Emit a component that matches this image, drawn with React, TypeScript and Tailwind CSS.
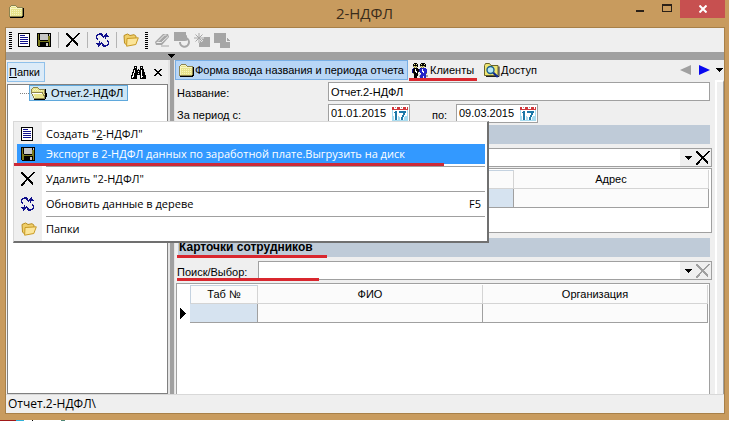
import { useState } from 'react'
import type { ReactNode } from 'react'

const COLORS: Record<string, string> = {
  k: '#000000',
  w: '#ffffff',
  g: '#a0a0a0',
  s: '#c6c6c6',
  n: '#10108c',
  b: '#2424c8',
  o: '#7a7a1e',
  y: '#e8e48c',
  l: '#f8f4c0',
  d: '#8c8450',
  r: '#d0383c',
  c: '#a8dcf0',
  a: '#1c78a8',
}

interface PixelsProps {
  rows: string[]
  className?: string
}

// one character = one pixel, a dot is transparent
function Pixels({ rows, className = '' }: PixelsProps) {
  return (
    <svg
      width={rows[0].length}
      height={rows.length}
      shapeRendering="crispEdges"
      aria-hidden="true"
      className={`shrink-0 ${className}`}
    >
      {rows.map((row, y) =>
        row.split('').map((c, x) =>
          COLORS[c] ? <rect key={`${x}-${y}`} x={x} y={y} width={1} height={1} fill={COLORS[c]} /> : null
        )
      )}
    </svg>
  )
}

const DOC = [
  'kkkkkkkkkkkk',
  'kwwwwwwwwwwk',
  'kwnnnnnwwwwk',
  'kwwwwwwwwwwk',
  'kwnnnnnnnnwk',
  'kwwwwwwwwwwk',
  'kwnnnnnnnnwk',
  'kwwwwwwwwwwk',
  'kwnnnnnnnnwk',
  'kwwwwwwwwwwk',
  'kwnnnnnnnnwk',
  'kwwwwwwwwwwk',
  'kwwwwwwwwwwk',
  'kkkkkkkkkkkk',
]

const DISK = [
  'kkkkkkkkkkkkkk',
  'kokssssssssksk',
  'kokssssssssksk',
  'kokssssssssook',
  'kokssssssssook',
  'kokssssssssook',
  'kokssssssssook',
  'kookkkkkkkkook',
  'kooooooooooook',
  'kookkkkkkkkkok',
  'kookkkkkksskok',
  'kookkkkkksskok',
  'kookkkkkksskok',
  '.kkkkkkkkkkkkk',
]

const CROSS = [
  'kk..........kk',
  'kkk........kk.',
  '.kkk......kk..',
  '..kkk....kk...',
  '...kkk..kk....',
  '....kkkkk.....',
  '.....kkk......',
  '.....kkkk.....',
  '....kk.kkk....',
  '...kk...kkk...',
  '..kk.....kkk..',
  '.kkk......kk..',
  'kkk........k..',
  'kk............',
]

const CROSS_OFF = CROSS.map(row => row.replace(/k/g, 'g'))

const REFRESH = [
  '...nnn....n..',
  '.nnnnnn..nn..',
  'nn...nn.nnnn.',
  'n.....nnnnnnn',
  'n......n.n...',
  'nn.......n...',
  '.n...........',
  '...........n.',
  '...n.......nn',
  '...n.n......n',
  'nnnnnnn.....n',
  '.nnnn.nn...nn',
  '..nn..nnnnnn.',
  '..n....nnn...',
]

const FOLDER = [
  '..ddddd........',
  '.dllllld.......',
  'dlyyyyyldddddd.',
  'dlllllllllllldk',
  'dlyyyyyyyyyyydk',
  'dlylylylylylydk',
  'dlyyyyyyyyyyydk',
  'dlylylylylylydk',
  'dlyyyyyyyyyyydk',
  'dlylylylylylydk',
  'dlyyyyyyyyyyydk',
  'dddddddddddddkk',
  '.kkkkkkkkkkkkk.',
]

const FOLDER_OPEN = [
  '..ddddd.........',
  '.dyyyyyd........',
  'dyylylyyddddddk.',
  'dylylylylylyydk.',
  'dyyyyyyyyyyyydk.',
  'ddddddddddddydk.',
  'dwwwwwwwwwwdydkk',
  '.dlyyyyyyyyydykk',
  '.dlyyyyyyyyyddkk',
  '..dlyyyyyyyyydkk',
  '..dlyyyyyyyyydk.',
  '...dddddddddddk.',
  '...kkkkkkkkkkk..',
]

const BINOCULARS = [
  '...kkk...kkk...',
  '...kwk...kwk...',
  '...kkk...kkk...',
  '..kkkk.k.kkkk..',
  '..kwkkkkkkwkk..',
  '..kwkkkwkkwkk..',
  '.kkwkkkkkkwkkk.',
  '.kwkkkkwkkwkkk.',
  '.kwkkkkkkkwkkk.',
  'kkwkkk...kwkkkk',
  'kwwkkk...kwwkkk',
  'kwkkkk...kwkkkk',
  'kkkkkk...kkkkkk',
]

const SMALL_CROSS = ['kk....kk', '.kk..kk.', '..kkkk..', '...kk...', '..kkkk..', '.kk..kk.', 'kk....kk']

const CARET = ['kkkkkkk', '.kkkkk.', '..kkk..', '...k...']

const MARKER = ['k.....', 'kk....', 'kkk...', 'kkkk..', 'kkkkk.', 'kkkkkk', 'kkkkk.', 'kkkk..', 'kkk...', 'kk....', 'k.....']

const CALENDAR = [
  '..www...www...w.',
  'rrwgwrrrwgwrrrwr',
  'rrwwwrrrwwwrrrwr',
  'rrrrrrrrrrrrrrrr',
  'cwwwwwwwwwwwwwwc',
  'cwwaawwaaaaaaawc',
  'cwaaawwaaaaaaawc',
  'cwwaawwwwwwaawwc',
  'cwwaawwwwwwaawwc',
  'cwwaawwwwwaawwwc',
  'ccwaawcwwwaawccc',
  'ccwaawccwaawcccc',
  'ccwaawccwaawcccc',
  'ccwaawccwaawcccc',
  'cccccccccccccccc',
]

const CLIENTS = [
  '..kkk....kkkk...',
  '.kykyk..kykkyk..',
  '.kkkkk..kkkkkk..',
  '.dydyk..dydydk..',
  '..dyd....dyd....',
  '.nkkkk..nbbbbb..',
  'nkkwkkknbbwbbbb.',
  'nkkwkkknbbwbbbb.',
  'nkkwwkkbbbwwbbb.',
  'nkkkwkswbbbwbbb.',
  '.dkkkkwswbbbbbd.',
  '..kkkkswsbbbbb..',
  '..kkkk.sbbbbbbgg',
  '..kkk..gbbb.bbgg',
  '..kkk...bbb.bb..',
]

function YellowFolder({ className = '' }: { className?: string }) {
  return (
    <svg width="16" height="14" viewBox="0 0 16 14" className={`shrink-0 ${className}`} aria-hidden="true">
      <path d="M1 2.5 4.5 1 7 2.5l4-.8 2 1.5v3L4 12.5 1.5 10z" fill="#f0cf6a" stroke="#b98d20" />
      <path d="M4 5.5 15.3 4.8 12.8 11.5 3.6 13.2z" fill="#fbe59a" stroke="#c99a24" />
    </svg>
  )
}

function AccessIcon() {
  return (
    <svg width="16" height="15" viewBox="0 0 16 15" aria-hidden="true" className="shrink-0">
      <path d="M.5 12.5v-10l1-2h4l1.5 2h7v10z" fill="#efe672" stroke="#6c6628" />
      <path d="M2 13.5h13v-10" fill="none" stroke="#222" />
      <circle cx="6.5" cy="7" r="3.5" fill="#b8e8f4" stroke="#1b5f8c" strokeWidth="1.4" />
      <path d="m9.3 9.7 4.5 4.3" stroke="#102c90" strokeWidth="2.2" />
    </svg>
  )
}

function EraserIcon() {
  return (
    <svg width="15" height="14" viewBox="0 0 15 14" aria-hidden="true">
      <path d="M0 9 8 1h5l1 3-7 8H1z" fill="#a6a6a6" />
      <path d="M3 8.5 9.500 2h2M1.500 9.500h5L13 3.500" stroke="#efefef" fill="none" />
      <path d="M6 13h8" stroke="#a6a6a6" />
    </svg>
  )
}

function RotateIcon() {
  return (
    <svg width="17" height="16" viewBox="0 0 17 16" aria-hidden="true">
      <path d="M0 0h12v9H0z" fill="#a6a6a6" />
      <path d="M6 10a4.500 4.500 0 1 0 6-4" fill="none" stroke="#efefef" strokeWidth="4" />
      <path d="M6 10a4.500 4.500 0 1 0 6-4" fill="none" stroke="#a6a6a6" strokeWidth="2" />
      <path d="m8 6 5-3v6z" fill="#a6a6a6" />
    </svg>
  )
}

function NewShapeIcon() {
  return (
    <svg width="16" height="14" viewBox="0 0 16 14" aria-hidden="true">
      <path d="M5 4h11v10H5z" fill="#a6a6a6" />
      <path d="M5 0v10M0 5h10M1.500 1.500l7 7M8.500 1.500l-7 7" stroke="#efefef" strokeWidth="2" />
      <path d="M5 0v10M0 5h10M1.500 1.500l7 7M8.500 1.500l-7 7" stroke="#a6a6a6" />
    </svg>
  )
}

function CopyShapeIcon() {
  return (
    <svg width="17" height="15" viewBox="0 0 17 15" aria-hidden="true" shapeRendering="crispEdges">
      <path d="M0 0h12v10H0z" fill="#a6a6a6" />
      <path d="M5 11h3M13 3v2" stroke="#efefef" />
      <path d="M6 5h7l3 3v7H6z" fill="#a6a6a6" />
      <path d="M12.500 5v3.500H16" stroke="#efefef" fill="none" />
    </svg>
  )
}

function ToolButton({ label, disabled, children }: { label: string; disabled?: boolean; children: ReactNode }) {
  return (
    <button type="button" aria-label={label} disabled={disabled} className="flex h-5 w-5 items-center justify-center">
      {children}
    </button>
  )
}

function Grip() {
  return (
    <div className="flex w-[3px] flex-col gap-px">
      {Array.from({ length: 9 }, (_, i) => (
        <span key={i} className="h-px bg-black" />
      ))}
    </div>
  )
}

function ToolSeparator() {
  return <div className="mx-1 h-4 w-px bg-[#b4b4b4]" />
}

function Toolbar() {
  return (
    <div className="flex h-6 shrink-0 items-center bg-[#efefef] pl-[3px]">
      <Grip />
      <div className="ml-[2px] flex items-center">
        <ToolButton label="Создать"><Pixels rows={DOC} /></ToolButton>
        <ToolButton label="Экспорт"><Pixels rows={DISK} /></ToolButton>
        <ToolSeparator />
        <ToolButton label="Удалить"><Pixels rows={CROSS} /></ToolButton>
        <ToolSeparator />
        <ToolButton label="Обновить"><Pixels rows={REFRESH} /></ToolButton>
        <ToolSeparator />
        <ToolButton label="Папки"><YellowFolder /></ToolButton>
      </div>
      <div className="ml-1 flex items-center">
        <Grip />
        <div className="ml-1 flex items-center">
          <ToolButton label="Очистить" disabled><EraserIcon /></ToolButton>
          <ToolButton label="Заменить" disabled><RotateIcon /></ToolButton>
          <ToolButton label="Добавить" disabled><NewShapeIcon /></ToolButton>
          <ToolButton label="Копировать" disabled><CopyShapeIcon /></ToolButton>
        </div>
      </div>
    </div>
  )
}

function TitleBar() {
  return (
    <header className="relative flex h-[27px] shrink-0 items-start justify-center">
      <Pixels rows={FOLDER} className="absolute left-[9px] top-[5px]" />
      <h1 className="font-['Open_Sans',sans-serif] text-[15px] leading-[26px] text-[#3a2c1a]">2-НДФЛ</h1>
      <div className="absolute right-1 top-0 flex h-[18px]">
        <button type="button" aria-label="Свернуть" className="flex w-[27px] justify-center pt-[10px]">
          <span className="h-[2px] w-2 bg-[#2b2118]" />
        </button>
        <button type="button" aria-label="Развернуть" className="flex w-[27px] justify-center pt-1">
          <span className="h-2 w-[10px] border border-t-2 border-[#2b2118]" />
        </button>
        <button type="button" aria-label="Закрыть" className="flex w-[45px] items-center justify-center bg-[#c75050]">
          <svg width="8" height="8" viewBox="0 0 8 8" aria-hidden="true">
            <path d="m.5.5 7 7m0-7-7 7" stroke="#fff" strokeWidth="2" />
          </svg>
        </button>
      </div>
    </header>
  )
}

function TreePanel() {
  return (
    <aside className="flex w-[162px] shrink-0 flex-col pl-px">
      <div className="flex h-6 items-center">
        <button type="button" className="h-5 w-[38px] border border-[#8fc0ea] bg-[#dcebf8] pl-px text-left text-[11px]">
          <span className="underline">П</span>апки
        </button>
        <button type="button" aria-label="Найти" className="ml-auto"><Pixels rows={BINOCULARS} /></button>
        <button type="button" aria-label="Закрыть панель" className="mr-[6px] ml-2"><Pixels rows={SMALL_CROSS} /></button>
      </div>
      <ul className="flex-1 border border-[#808080] bg-white">
        <li className="flex items-center pl-3">
          <span className="w-[9px] border-t border-dotted border-[#808080]" />
          <button type="button" className="flex h-4 items-center gap-1 border border-[#5fa8dc] bg-[#cde6f5] pr-1 pl-px text-[11px]">
            <Pixels rows={FOLDER_OPEN} />
            Отчет.2-НДФЛ
          </button>
        </li>
      </ul>
    </aside>
  )
}

function Tabs() {
  return (
    <div role="tablist" className="flex h-5 shrink-0 items-center text-[11px]">
      <button type="button" role="tab" aria-selected="true" className="flex h-5 items-center gap-px border border-[#78aee4] bg-[#b8d6f6] px-[3px]">
        <Pixels rows={FOLDER} />
        Форма ввода названия и периода отчета
      </button>
      <button type="button" role="tab" aria-selected="false" className="relative ml-px flex h-5 items-center gap-[2px] px-[3px]">
        <Pixels rows={CLIENTS} />
        Клиенты
        <span className="absolute inset-x-0 -bottom-px h-[3px] bg-[#d9272e]" />
      </button>
      <button type="button" role="tab" aria-selected="false" className="ml-1 flex h-5 items-center gap-px px-[3px]">
        <AccessIcon />
        Доступ
      </button>
      <div className="ml-auto flex items-center gap-[6px] pr-px">
        <button type="button" aria-label="Назад">
          <svg width="12" height="12" aria-hidden="true"><path d="M0 6 11 1v10z" fill="#a0a0a0" /></svg>
        </button>
        <button type="button" aria-label="Вперед">
          <svg width="12" height="12" aria-hidden="true"><path d="M12 6 1 1v10z" fill="#0808f0" /></svg>
        </button>
        <button type="button" aria-label="Список вкладок"><Pixels rows={CARET} /></button>
      </div>
    </div>
  )
}

function DateField({ id, value, onChange }: { id: string; value: string; onChange: (v: string) => void }) {
  return (
    <div className="flex h-[19px] w-[82px] border border-[#a0a0a0] bg-white pr-px">
      <input
        id={id}
        value={value}
        onChange={e => onChange(e.target.value)}
        className="w-0 min-w-0 flex-1 pl-[2px] text-[11px] outline-none"
      />
      <button type="button" aria-label="Выбрать дату" className="flex items-center"><Pixels rows={CALENDAR} /></button>
    </div>
  )
}

function Combo({ id, label, disabled }: { id: string; label?: string; disabled?: boolean }) {
  return (
    <div className="flex h-[19px] flex-1 border border-[#a0a0a0] bg-white">
      <div className="relative flex-1">
        <select id={id} aria-label={label} className="h-full w-full appearance-none pr-4 pl-1 text-[11px] outline-none">
          <option></option>
        </select>
        <span className="pointer-events-none absolute inset-y-0 right-0 flex w-4 items-center justify-center bg-[#efefef]">
          <Pixels rows={CARET} />
        </span>
      </div>
      <button type="button" aria-label="Очистить" disabled={disabled} className="flex w-[15px] items-center bg-[#efefef]">
        <Pixels rows={disabled ? CROSS_OFF : CROSS} />
      </button>
    </div>
  )
}

interface GridProps {
  label: string
  columns: { title: string; width: string }[]
  selected: number
}

function Grid({ label, columns, selected }: GridProps) {
  return (
    <table aria-label={label} className="w-full table-fixed border-separate border-spacing-0 text-[11px]">
      <thead>
        <tr className="h-[19px]">
          <th className="w-3" />
          {columns.map((c, i) => (
            <th
              key={i}
              className={`${c.width} border-r border-b border-[#d4d4d4] bg-[#fbfbfb] p-0 text-center font-normal ${
                i === selected ? 'border-t border-l border-t-[#c4d2e0] border-l-[#c4d2e0]' : ''
              }`}
            >
              {c.title}
            </th>
          ))}
        </tr>
      </thead>
      <tbody>
        <tr className="h-[19px]">
          <td className="p-0 pl-[2px]"><Pixels rows={MARKER} /></td>
          {columns.map((_, i) => (
            <td
              key={i}
              className={`border-r border-b border-[#a0a0a0] p-0 ${i === selected ? 'bg-[#d6e3f0]' : 'bg-[#fbfbfb]'}`}
            />
          ))}
        </tr>
      </tbody>
    </table>
  )
}

function ReportForm() {
  const [name, setName] = useState('Отчет.2-НДФЛ')
  const [from, setFrom] = useState('01.01.2015')
  const [to, setTo] = useState('09.03.2015')

  return (
    <div className="flex min-w-0 flex-1 flex-col pt-[2px] pr-[3px] pl-px text-[11px]">
      <div className="mr-[2px] flex h-[19px] items-center">
        <label htmlFor="name" className="w-[152px] shrink-0 pt-1 pl-px">Название:</label>
        <input
          id="name"
          value={name}
          onChange={e => setName(e.target.value)}
          className="h-[19px] min-w-0 flex-1 border border-[#a0a0a0] bg-white px-[2px] text-[11px] outline-none"
        />
      </div>
      <div className="mt-[3px] flex h-[19px] items-center">
        <label htmlFor="from" className="w-[152px] shrink-0 pt-1 pl-px">За период с:</label>
        <DateField id="from" value={from} onChange={setFrom} />
        <label htmlFor="to" className="w-[46px] pt-1 pl-[22px]">по:</label>
        <DateField id="to" value={to} onChange={setTo} />
      </div>
      <div className="mt-[2px] mr-[2px] ml-[2px] h-[19px] shrink-0 bg-[#bfcbd8]" />
      <div className="mt-1 flex h-[19px] items-center pl-[82px]">
        <Combo id="client" label="Клиент" />
      </div>
      <div className="mt-px h-[65px] shrink-0 border border-[#a0a0a0] bg-white p-px pr-0.5">
        <Grid
          label="Клиенты"
          selected={1}
          columns={[
            { title: '', width: 'w-[135px]' },
            { title: '', width: 'w-[189px]' },
            { title: 'Адрес', width: '' },
          ]}
        />
      </div>
      <h2 className="relative mt-[5px] mr-[2px] ml-[2px] h-[19px] shrink-0 bg-[#bfcbd8] pl-px text-[12px] leading-[19px] font-bold">
        Карточки сотрудников
        <span className="absolute -bottom-px -left-px h-[3px] w-[150px] bg-[#d9272e]" />
      </h2>
      <div className="relative mt-1 flex h-[19px] items-center">
        <label htmlFor="employee" className="w-[82px] shrink-0 pt-1 pl-px">Поиск/Выбор:</label>
        <Combo id="employee" disabled />
        <span className="absolute -bottom-px left-px h-[3px] w-[142px] bg-[#d9272e]" />
      </div>
      <div className="mt-[3px] mr-[2px] flex-1 border border-b-0 border-[#a0a0a0] bg-white p-px">
        <Grid
          label="Карточки сотрудников"
          selected={0}
          columns={[
            { title: 'Таб №', width: 'w-[68px]' },
            { title: 'ФИО', width: '' },
            { title: 'Организация', width: '' },
          ]}
        />
      </div>
    </div>
  )
}

interface MenuItemProps {
  icon: ReactNode
  active?: boolean
  hotkey?: string
  children: ReactNode
}

function MenuItem({ icon, active, hotkey, children }: MenuItemProps) {
  return (
    <button
      type="button"
      role="menuitem"
      className={`flex h-5 w-full items-center pr-1 ${active ? 'bg-[#3399ff] text-white' : 'text-black'}`}
    >
      <span className="flex w-[29px] shrink-0 pl-1">{icon}</span>
      <span className="whitespace-nowrap">{children}</span>
      {hotkey && <span className="ml-auto">{hotkey}</span>}
    </button>
  )
}

function MenuSeparator() {
  return (
    <div role="separator" className="flex h-[5px] items-center pl-[29px]">
      <span className="h-px w-full bg-[#a0a0a0]" />
    </div>
  )
}

function ContextMenu() {
  return (
    <div
      role="menu"
      className="absolute top-[121px] left-[13px] w-[476px] border-t border-r-2 border-b-2 border-l border-t-[#d8d8d8] border-r-[#707070] border-b-[#707070] border-l-[#d8d8d8] bg-linear-to-r from-[#efefef] from-[28px] to-white to-[28px] py-[2px] pr-[2px] pl-[3px] font-['Open_Sans',sans-serif] text-[11px]"
    >
      <MenuItem icon={<Pixels rows={DOC} />}>
        Создать "<span className="underline">2</span>-НДФЛ"
      </MenuItem>
      <MenuItem active icon={<Pixels rows={DISK} />}>
        Экспорт в 2-НДФЛ данных по заработной плате.Выгрузить на диск
      </MenuItem>
      <MenuSeparator />
      <MenuItem icon={<Pixels rows={CROSS} />}>Удалить "2-НДФЛ"</MenuItem>
      <MenuSeparator />
      <MenuItem icon={<Pixels rows={REFRESH} />} hotkey="F5">Обновить данные в дереве</MenuItem>
      <MenuSeparator />
      <MenuItem icon={<YellowFolder />}>Папки</MenuItem>
      <span className="absolute top-[41px] left-0 h-[3px] w-[430px] bg-[#cc2a38]" />
    </div>
  )
}

export default function App() {
  return (
    <div className="relative flex min-h-screen flex-col bg-[#c89b5e] font-['Liberation_Sans',sans-serif] text-black">
      <TitleBar />
      <main className="mr-1 ml-[5px] flex flex-1 flex-col border border-[#a88048] bg-[#efefef]">
        <Toolbar />
        <div className="flex h-2 shrink-0 items-center bg-[#a0a0a0] pl-[162px]">
          <Pixels rows={CARET} />
        </div>
        <div className="flex flex-1">
          <TreePanel />
          <div className="w-[7px] shrink-0 border-r border-l-2 border-[#e4e4e4] bg-[#a0a0a0]" />
          <section className="flex min-w-0 flex-1 flex-col">
            <Tabs />
            <div className="flex flex-1">
              <ReportForm />
              <div className="w-[9px] shrink-0 border-t-2 border-r border-l-2 border-t-white border-r-[#a0a0a0] border-l-white" />
            </div>
          </section>
        </div>
        <footer className="h-[19px] shrink-0 border-t border-[#d8d8d8] pl-[2px] font-['Open_Sans',sans-serif] text-[12px] leading-[18px]">
          Отчет.2-НДФЛ\
        </footer>
      </main>
      <div className="h-[6px] shrink-0" />
      <div className="flex h-px shrink-0 bg-white">
        <span className="w-4 bg-[#a01818]" />
        <span className="w-2 bg-[#30b0d8]" />
        <span className="ml-2 w-px bg-black" />
        <span className="ml-7 w-1 bg-[#508878]" />
      </div>
      <ContextMenu />
    </div>
  )
}
